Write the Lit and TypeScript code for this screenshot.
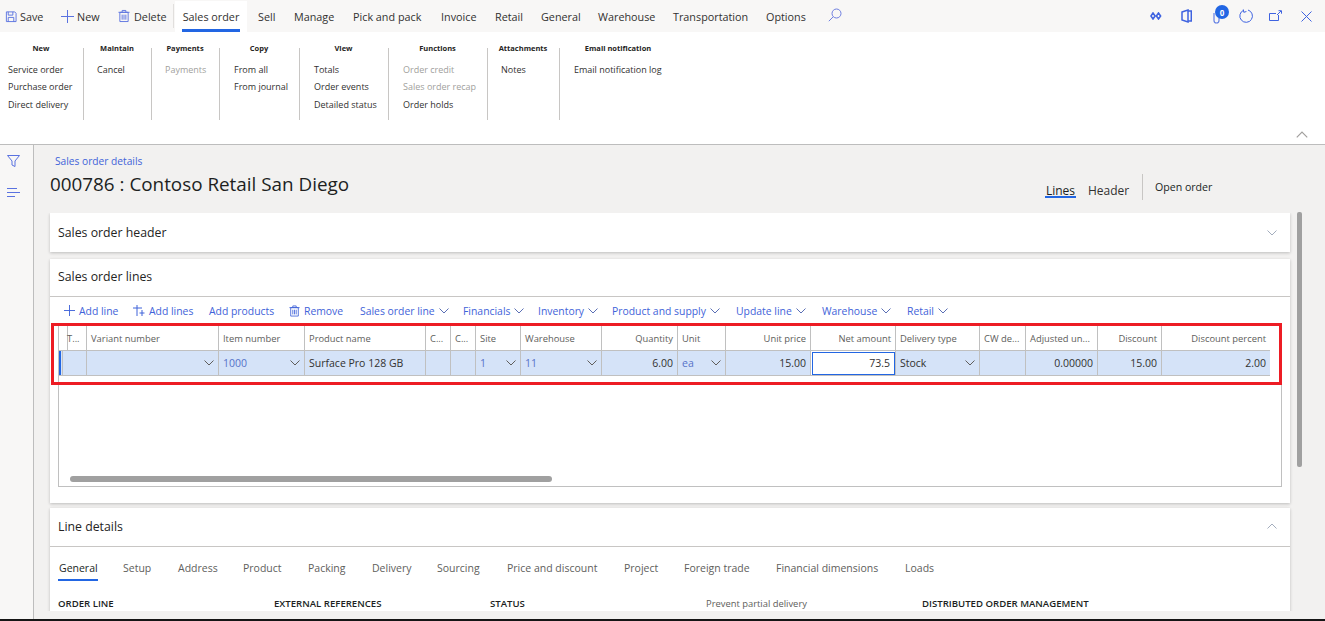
import { LitElement, html, css, svg } from "lit";
import { customElement } from "lit/decorators.js";

const chev = (up = false, cls = "chev") => html`<svg class=${cls} viewBox="0 0 10 6" width="10" height="6" fill="none" stroke="currentColor" stroke-width="1"><path d=${up ? "M.5 5.5 5 1l4.5 4.5" : "M.5.5 5 5 9.5.5"}/></svg>`;

const icons = {
  save: svg`<path d="M1.5 1.5h9l1.5 1.5v9h-10.5z"/><path d="M3.5 1.5v3.5h5v-3.5M3.5 12v-4.5h6v4.5"/>`,
  plus: svg`<path d="M6.5 0v13M0 6.5h13"/>`,
  trash: svg`<path d="M2 3h9v10h-9zM0.5 3h12M4.5 3v-2h4v2M4.5 5.5v5.5M6.5 5.5v5.5M8.5 5.5v5.5"/>`,
};

const TOP = [["Sell", 36], ["Manage", 59], ["Pick and pack", 88], ["Invoice", 54], ["Retail", 46], ["General", 57], ["Warehouse", 75], ["Transportation", 93], ["Options", 62]] as const;

const RIBBON = [
  { t: "New", w: 84, p: 8, items: [["Service order"], ["Purchase order"], ["Direct delivery"]] },
  { t: "Maintain", w: 68, p: 13, items: [["Cancel"]] },
  { t: "Payments", w: 68, p: 13, items: [["Payments", 1]] },
  { t: "Copy", w: 80, p: 14, items: [["From all"], ["From journal"]] },
  { t: "View", w: 89, p: 14, items: [["Totals"], ["Order events"], ["Detailed status"]] },
  { t: "Functions", w: 99, p: 14, items: [["Order credit", 1], ["Sales order recap", 1], ["Order holds"]] },
  { t: "Attachments", w: 72, p: 13, items: [["Notes"]] },
  { t: "Email notification", w: 117, p: 14, items: [["Email notification log"]] },
];

const ACTIONS: [string, number, string, boolean][] = [
  ["Add line", 69, "plus", false], ["Add lines", 76, "plus2", false], ["Add products", 80, "", false], ["Remove", 71, "trash", false],
  ["Sales order line", 103, "", true], ["Financials", 75, "", true], ["Inventory", 74, "", true], ["Product and supply", 124, "", true],
  ["Update line", 86, "", true], ["Warehouse", 85, "", true], ["Retail", 60, "", true],
];

const COLS: [string, string, string, string][] = [
  ["", "", "", ""],
  ["T...", "", "", ""],
  ["Variant number", "", "", "c"],
  ["Item number", "1000", "link", "c"],
  ["Product name", "Surface Pro 128 GB", "", ""],
  ["C...", "", "", ""],
  ["C...", "", "", ""],
  ["Site", "1", "link", "c"],
  ["Warehouse", "11", "link", "c"],
  ["Quantity", "6.00", "r", ""],
  ["Unit", "ea", "link", "c"],
  ["Unit price", "15.00", "r", ""],
  ["Net amount", "73.5", "focus", ""],
  ["Delivery type", "Stock", "", "c"],
  ["CW de...", "", "", ""],
  ["Adjusted un...", "0.00000", "ra", ""],
  ["Discount", "15.00", "r", ""],
  ["Discount percent", "2.00", "r", ""],
];

const DTABS = [["General", 64], ["Setup", 55], ["Address", 65], ["Product", 65], ["Packing", 64], ["Delivery", 65], ["Sourcing", 70], ["Price and discount", 117], ["Project", 60], ["Foreign trade", 92], ["Financial dimensions", 129], ["Loads", 40]] as const;

@customElement("app-root")
export class AppRoot extends LitElement {
  static styles = css`
    :host { display: flex; flex-direction: column; width: 100%; height: 621px; overflow: hidden; font-family: "Open Sans", "Noto Sans", sans-serif; color: #201f1e; background: #f2f1f0; position: relative; }
    * { box-sizing: border-box; }
    svg { display: block; flex: none; }
    .top { flex: 0 0 32px; height: 32px; background: #f8f7f6; display: flex; align-items: center; font-size: 10.8px; white-space: nowrap; color: #323130; }
    .cmd { display: flex; align-items: center; height: 32px; }
    .cmd svg { stroke: #5a72e0; fill: none; }
    .cmd.save { padding-left: 5px; width: 61px; gap: 3px; }
    .cmd.new { width: 57px; gap: 3px; }
    .cmd.del { width: 55px; gap: 4px; }
    .vsep { width: 1px; height: 24px; background: #e1dfdd; }
    .tab0 { margin-left: 1px; width: 72px; height: 31px; margin-top: 1px; background: #fff; padding: 0 7px; display: flex; align-items: center; justify-content: center; position: relative; }
    .tab0::after { content: ""; position: absolute; left: 7px; right: 7px; bottom: 0; height: 3px; background: #2266e3; }
    .tab0 + .menu { margin-left: 11px; }
    .menu { flex: none; }
    .search { stroke: #6f7fe0; fill: none; margin-top: -3px; }
    .ricons { margin-left: auto; display: flex; align-items: center; padding-right: 13px; height: 32px; }
    .ricons svg { fill: none; stroke: #3f63e0; }
    .ic1 { margin-right: 19px; }
    .ic2 { margin-right: 21px; }
    .bell { width: 26px; height: 32px; position: relative; }
    .bell svg { position: absolute; left: 0; top: 9px; }
    .badge { position: absolute; left: 2px; top: 5px; width: 14px; height: 14px; border-radius: 50%; background: #2266e3; color: #fff; font-size: 8px; font-weight: 700; display: flex; align-items: center; justify-content: center; }
    .ic3 { margin-right: 16px; }
    .ic4 { margin-right: 19px; }

    .ribbon { flex: 0 0 113px; height: 113px; background: #fff; border-bottom: 1px solid #bdbdbd; display: flex; padding-top: 16px; position: relative; }
    .grp { flex: none; height: 72px; border-right: 1px solid #c8c6c4; display: flex; flex-direction: column; white-space: nowrap; font-size: 9px; color: #323130; }
    .grp:nth-child(8) { border-right: none; }
    .grp h4 { margin: -6px 0 0; font-size: 7.5px; font-weight: 700; text-align: center; line-height: 12px; padding-right: 1px; color: #252423; }
    .grp .ri { line-height: 17.4px; }
    .grp .items { margin-top: 7px; }
    .off { color: #a19f9d; }
    .collapse { position: absolute; right: 17px; bottom: 6px; color: #a19f9d; }
    .collapse svg { width: 12px; height: 7px; }

    .main { flex: 1; display: flex; min-height: 0; }
    .rail { flex: 0 0 34px; background: #f8f7f6; border-right: 1px solid #bdbdbd; padding: 10px 0 0 7px; }
    .rail svg { fill: none; stroke: #5a72e0; stroke-width: 1; }
    .rail svg + svg { margin-top: 20px; }
    .content { flex: 1; min-width: 0; display: flex; flex-direction: column; padding: 0 35px 8px 16px; position: relative; }
    .phead { flex: 0 0 68px; position: relative; display: flex; align-items: flex-start; justify-content: space-between; }
    .crumb { font-size: 10.2px; color: #3f63d9; padding: 9px 0 0 5px; line-height: 14px; }
    .title { font-size: 18.85px; font-weight: 500; line-height: 24px; margin: 4px 0 0; color: #201f1e; white-space: nowrap; }
    .ptabs { display: flex; align-items: flex-start; font-size: 12px; padding-top: 29px; color: #323130; }
    .ptabs .on { width: 31px; margin-right: 12px; border-bottom: 2px solid #2266e3; height: 24px; line-height: 33px; text-align: center; color: #201f1e; }
    .ptabs .hd { width: 54px; line-height: 33px; }
    .ptabs .div { width: 1px; height: 26px; background: #c8c6c4; }
    .ptabs .open { padding-left: 12px; font-size: 10.6px; line-height: 24px; margin-top: 1px; color: #201f1e; margin-right: 1px; width: 146px; }
    .scroll { flex: 1; min-height: 0; overflow: hidden; margin: 0 -6px; padding: 0 6px; }
    .card { background: #fff; box-shadow: 0 1px 3px rgba(0,0,0,.22); }
    .chd { display: flex; align-items: center; justify-content: space-between; padding: 0 13px 0 8px; font-size: 12.3px; font-weight: 500; color: #252423; }
    .chd svg { color: #a3adbd; }
    .c1 { height: 39px; margin-bottom: 7px; }
    .c1 .chd { height: 39px; }
    .c2 { height: 244px; margin-bottom: 5px; padding-bottom: 16px; display: flex; flex-direction: column; }
    .c2 .chd { height: 38px; padding-bottom: 2px; border-bottom: 1px solid #c8c6c4; flex: none; }
    .c3 .chd { height: 39px; padding-bottom: 2px; border-bottom: 1px solid #c8c6c4; flex: none; }
    .acts { flex: 0 0 27px; display: flex; padding: 6px 0 0 14px; font-size: 10.4px; color: #3f63d9; white-space: nowrap; }
    .act { flex: none; display: flex; align-items: center; gap: 4px; height: 15px; }
    .act svg { stroke: #3f63d9; fill: none; }
    .act .chev { color: #5a6fb5; stroke: currentColor; }
    .gbox { flex: 1; margin: 0 8px; border: 1px solid #c0c0c0; position: relative; }
    .rowg { display: grid; grid-template-columns: 4px 24px 132px 86px 121px 25px 25px 45px 81px 76px 48px 85px 85px 84px 46px 72px 64px 108px; width: 1210px; }
    .gh { height: 26px; }
    .gr { height: 25px; }
    .cell { border-right: 1px solid #c0c0c0; border-bottom: 1px solid #c0c0c0; display: flex; align-items: center; justify-content: space-between; padding: 0 4px; font-size: 9.4px; white-space: nowrap; overflow: hidden; }
    .cell:last-child { border-right: none; padding-right: 4px; }
    .gh .cell { color: #605e5c; font-weight: 500; padding-top: 1px; }
    .gh .cell.num { justify-content: flex-end; }
    .gr .cell { background: #d5e3f8; font-size: 10.5px; color: #323130; }
    .gr .cell.r, .gr .cell.ra { justify-content: flex-end; }
    .gr .cell.link span { color: #5672c8; }
    .gr .cell .chev { color: #605e5c; }
    .gr .cell.marker { padding: 0; background: #2266e3; box-shadow: inset -1px 0 0 #d5e3f8; }
    .gr .cell.focus { background: #fff; outline: 1.5px solid #2266e3; outline-offset: -2px; justify-content: flex-end; padding-right: 5px; }
    .hbar { position: absolute; left: 11px; top: 151px; width: 482px; height: 6px; background: #a0a0a0; border-radius: 3px; }
    .red { position: absolute; left: -8px; top: -2px; width: 1231px; height: 62px; border: 3px solid #ed1c24; pointer-events: none; }
    .c3 { height: 200px; }
    .dtabs { display: flex; padding: 13px 0 0 8px; font-size: 10.5px; color: #605e5c; white-space: nowrap; height: 35px; }
    .dtab { flex: none; padding-left: 1px; height: 22px; line-height: 17px; position: relative; }
    .dtab.on { color: #201f1e; }
    .dtab.on::after { content: ""; position: absolute; left: 0; width: 40px; top: 19px; height: 2px; background: #2266e3; }
    .secs { display: grid; grid-template-columns: repeat(5, 216px); padding: 15px 0 0 8px; font-size: 9.6px; font-weight: 600; line-height: 14px; color: #201f1e; white-space: nowrap; }
    .secs .plain { font-weight: 400; font-size: 9.4px; color: #605e5c; }
    .vbar { position: absolute; left: 1263px; top: 67px; width: 5px; height: 255px; background: #a0a0a0; border-radius: 2px; }
    .bottom { flex: 0 0 2px; background: #151515; }
  `;

  render() {
    return html`
      <div class="top">
        <div class="cmd save"><svg width="12" height="13" viewBox="0 0 13 13" stroke-width="1">${icons.save}</svg><span>Save</span></div>
        <div class="cmd new"><svg width="13" height="13" viewBox="0 0 13 13" stroke-width="1">${icons.plus}</svg><span>New</span></div>
        <div class="cmd del"><svg width="12" height="14" viewBox="0 0 13 14" stroke-width="1">${icons.trash}</svg><span>Delete</span></div>
        <div class="vsep"></div>
        <div class="tab0">Sales order</div>
        ${TOP.map(([t, w]) => html`<div class="menu" style="width:${w}px">${t}</div>`)}
        <svg class="search" width="14" height="14" viewBox="0 0 14 14" stroke-width="1"><circle cx="8.5" cy="5.5" r="4.5"/><path d="M5.2 8.8.8 13.2"/></svg>
        <div class="ricons">
          <svg class="ic1" width="12" height="8" viewBox="0 0 12 8" stroke-width="1.6"><path d="M3 1 .9 4 3 7l2.100-3zM8.5 1 6.4 4l2.100 3 2.100-3z"/></svg>
          <svg class="ic2" width="11" height="14" viewBox="0 0 11 14" stroke-width="1.5"><path d="M1 3 7 1v12l-6-2zM7 2h3.3v10H7"/></svg>
          <div class="bell"><svg width="10" height="15" viewBox="0 0 10 15" stroke-width="1.2" opacity=".8"><path d="M1 4v7.5a2.5 2.5 0 0 0 5 0V9"/></svg><div class="badge">0</div></div>
          <svg class="ic3" width="14" height="14" viewBox="0 0 14 14" stroke-width="1"><path d="M4.5 1.3A6.3 6.3 0 1 0 9 1M4.3 .5l.5 2.800 2.600-.8"/></svg>
          <svg class="ic4" width="13" height="12" viewBox="0 0 13 12" stroke-width="1"><path d="M9.5 5v5.5h-9v-7h6.5M8 5l4-4M9.5.7h3v3"/></svg>
          <svg width="11" height="11" viewBox="0 0 11 11" stroke-width="1"><path d="M.5.5l10 10M10.5.5l-10 10"/></svg>
        </div>
      </div>

      <div class="ribbon">
        ${RIBBON.map((g) => html`<div class="grp" style="width:${g.w}px">
          <h4>${g.t}</h4>
          <div class="items" style="padding-left:${g.p}px">
            ${g.items.map((i) => html`<div class="ri ${i[1] ? "off" : ""}">${i[0]}</div>`)}
          </div>
        </div>`)}
        <div class="collapse">${chev(true)}</div>
      </div>

      <div class="main">
        <div class="rail">
          <svg width="13" height="12" viewBox="0 0 13 12"><path d="M.5.5h12L8 6v5.5L5 10V6z"/></svg>
          <svg width="13" height="11" viewBox="0 0 13 11"><path d="M0 1.5h10M0 5.5h13M0 9.5h8"/></svg>
        </div>
        <div class="content">
          <div class="phead">
            <div>
              <div class="crumb">Sales order details</div>
              <h1 class="title">000786 : Contoso Retail San Diego</h1>
            </div>
            <div class="ptabs">
              <div class="on">Lines</div>
              <div class="hd">Header</div>
              <div class="div"></div>
              <div class="open">Open order</div>
            </div>
          </div>
          <div class="scroll">
            <section class="card c1"><div class="chd"><span>Sales order header</span>${chev()}</div></section>
            <section class="card c2">
              <div class="chd"><span>Sales order lines</span></div>
              <div class="acts">
                ${ACTIONS.map(([t, w, ic, c]) => html`<div class="act" style="width:${w}px">
                  ${ic === "plus" ? html`<svg width="11" height="11" viewBox="0 0 13 13" stroke-width="1.1">${icons.plus}</svg>` : ""}
                  ${ic === "plus2" ? html`<svg width="12" height="11" viewBox="0 0 12 11" stroke-width="1"><path d="M4 0v11M0 3h9M9 5v6M6.5 8h5"/></svg>` : ""}
                  ${ic === "trash" ? html`<svg width="11" height="12" viewBox="0 0 13 14" stroke-width="1">${icons.trash}</svg>` : ""}
                  <span>${t}</span>${c ? chev() : ""}
                </div>`)}
              </div>
              <div class="gbox">
                <div class="rowg gh">
                  ${COLS.map(([h, , k]) => html`<div class="cell ${k === "r" || k === "focus" ? "num" : ""}"><span>${h}</span></div>`)}
                </div>
                <div class="rowg gr">
                  ${COLS.map(([, v, k, c], i) => i === 0
                    ? html`<div class="cell marker"></div>`
                    : html`<div class="cell ${k}"><span>${v}</span>${c ? chev() : ""}</div>`)}
                </div>
                <div class="hbar"></div>
                <div class="red"></div>
              </div>
            </section>
            <section class="card c3">
              <div class="chd"><span>Line details</span>${chev(true)}</div>
              <div class="dtabs">
                ${DTABS.map(([t, w], i) => html`<div class="dtab ${i === 0 ? "on" : ""}" style="width:${w}px">${t}</div>`)}
              </div>
              <div class="secs">
                <div>ORDER LINE</div><div>EXTERNAL REFERENCES</div><div>STATUS</div><div class="plain">Prevent partial delivery</div><div>DISTRIBUTED ORDER MANAGEMENT</div>
              </div>
            </section>
          </div>
          <div class="vbar"></div>
        </div>
      </div>
      <div class="bottom"></div>
    `;
  }
}
